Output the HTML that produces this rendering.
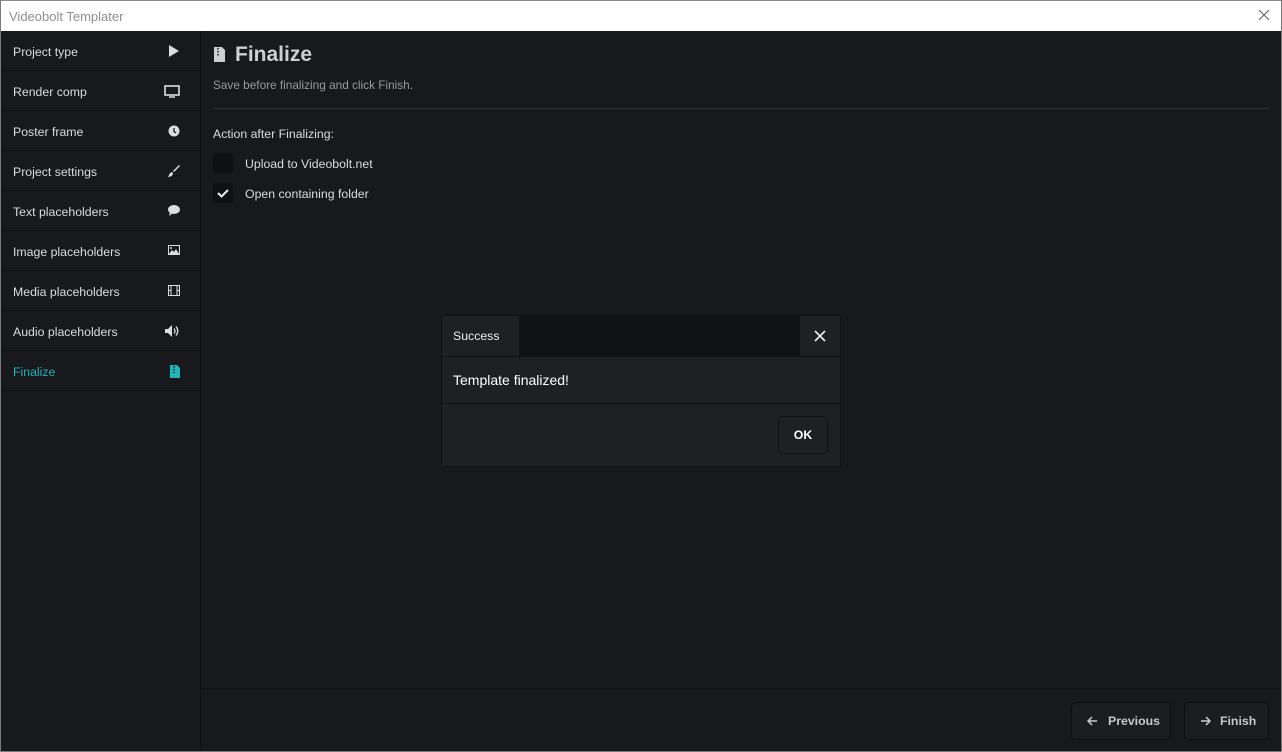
<!DOCTYPE html>
<html><head><style>
*{box-sizing:border-box;margin:0;padding:0}
body{width:1282px;height:752px;background:#18191c;font-family:"Liberation Sans",sans-serif;position:relative;overflow:hidden;color:#e6e6e6}
.frame{position:absolute;inset:0;border:1px solid #7a7a7a;border-top:none}
.title{position:absolute;left:0;top:0;width:1282px;height:31px;background:#fff;border:1px solid #8a8a8a;border-bottom:none;color:#8d8d8d;font-size:13px;line-height:31px;padding-left:8px}
.x{position:absolute;right:10px;top:7px}
.side{position:absolute;left:1px;top:31px;width:200px;height:720px;background:#18191c;border-right:1px solid #0e0f11}
.item{height:40px;border-bottom:1px solid #0e0f11;font-size:12.3px;line-height:42px;padding-left:12px;position:relative;color:#dcdcdc}
.item svg{position:absolute;right:20px;top:14px}
.item.act{color:#22b3bd}
.main{position:absolute;left:201px;top:31px;right:1px;bottom:1px}
h1{position:absolute;left:34px;top:12px;font-size:21px;font-weight:bold;color:#cfcfcf}
.sub{position:absolute;left:12px;top:47px;font-size:11.8px;color:#9a9a9a}
.hr{position:absolute;left:12px;right:12px;top:77px;border-top:1px solid #2d2e32}
.lbl{position:absolute;left:12px;top:96px;font-size:12.3px;color:#dcdcdc}
.cb{position:absolute;left:12px;width:20px;height:20px;background:#0f1012;border-radius:3px}
.cbl{position:absolute;left:44px;font-size:12.3px;color:#dcdcdc}
.foot{position:absolute;left:0;right:0;top:657px;border-top:1px solid #0e0f11;bottom:0}
.btn{position:absolute;top:13px;height:38px;border:1px solid #0c0d0f;border-radius:5px;background:#1c1d21;font-size:12.3px;font-weight:bold;color:#c8c8c8;line-height:36px}
.dlg{position:absolute;left:441px;top:315px;width:400px;height:152px;background:#1f2024;border:1px solid #111}
.dh{height:41px;background:#111213;position:relative;border-bottom:1px solid #111}
.tab{position:absolute;left:0;top:0;width:77px;height:40px;background:#1f2024;font-size:12.3px;line-height:40px;padding-left:11px;color:#eee}
.cl{position:absolute;right:0;top:0;width:40px;height:40px;background:#1f2024}
.db{height:47px;border-bottom:1px solid #111;font-size:14px;line-height:46px;padding-left:11px;color:#fff}
.ok{position:absolute;left:336px;top:100px;width:50px;height:38px;border:1px solid #111;border-radius:5px;font-size:12.3px;font-weight:bold;text-align:center;line-height:36px;color:#fff}
</style></head><body>
<div class="title">Videobolt Templater<svg class="x" width="14" height="14" viewBox="0 0 14 14"><path d="M2 2L12 12M12 2L2 12" stroke="#666" stroke-width="1.2"/></svg></div>
<div class="side">
<div class="item">Project type<svg width="12" height="12" viewBox="0 0 12 12"><path d="M1 0L11 6L1 12Z" fill="#ddd"/></svg></div>
<div class="item">Render comp<svg width="16" height="13" viewBox="0 0 16 13"><rect x="1" y="1" width="14" height="9" fill="none" stroke="#ddd" stroke-width="1.6"/><path d="M5 12H11" stroke="#ddd" stroke-width="1.5"/></svg></div>
<div class="item">Poster frame<svg width="12" height="12" viewBox="0 0 12 12"><circle cx="6" cy="6" r="5.5" fill="#ddd"/><path d="M6 3V6.5L8 8" stroke="#18191c" stroke-width="1.3" fill="none"/></svg></div>
<div class="item">Project settings<svg width="12" height="12" viewBox="0 0 12 12"><path d="M11 0L12 1L6 7L5 6Z M4 7L5 8C5 11 2 12 0 12C1 11 1 8 4 7Z" fill="#ddd"/></svg></div>
<div class="item">Text placeholders<svg width="12" height="11" viewBox="0 0 12 11"><ellipse cx="6" cy="4.5" rx="6" ry="4.5" fill="#ddd"/><path d="M2 7L1 11L5 8Z" fill="#ddd"/></svg></div>
<div class="item">Image placeholders<svg width="12" height="10" viewBox="0 0 12 10"><rect x="0.5" y="0.5" width="11" height="9" fill="none" stroke="#ddd"/><path d="M1 9L4 5L6 7L8 4L11 9Z" fill="#ddd"/><circle cx="3" cy="3" r="1" fill="#ddd"/></svg></div>
<div class="item">Media placeholders<svg width="12" height="11" viewBox="0 0 12 11"><rect x="0.5" y="0.5" width="11" height="10" fill="none" stroke="#ddd"/><path d="M3 0V11M9 0V11M0 5.5H3M9 5.5H12" stroke="#ddd"/></svg></div>
<div class="item">Audio placeholders<svg width="15" height="12" viewBox="0 0 15 12"><path d="M0 4H3L7 0V12L3 8H0Z" fill="#ddd"/><path d="M9 3.5Q11 6 9 8.5M11 1.5Q14.5 6 11 10.5" stroke="#ddd" stroke-width="1.3" fill="none"/></svg></div>
<div class="item act">Finalize<svg width="10" height="13" viewBox="0 0 10 13"><path d="M0 0H7L10 3V13H0Z" fill="#22b3bd"/><path d="M4 1V8" stroke="#18191c" stroke-width="1.5" stroke-dasharray="1.5 1.5"/></svg></div>
</div>
<div class="main">
<svg style="position:absolute;left:13px;top:16px" width="11" height="15" viewBox="0 0 11 15"><path d="M0 0H8L11 3V15H0Z" fill="#cfcfcf"/><path d="M4 1V9" stroke="#18191c" stroke-width="1.5" stroke-dasharray="1.5 1.5"/></svg>
<h1>Finalize</h1>
<div class="sub">Save before finalizing and click Finish.</div>
<div class="hr"></div>
<div class="lbl">Action after Finalizing:</div>
<div class="cb" style="top:122px"></div><div class="cbl" style="top:126px">Upload to Videobolt.net</div>
<div class="cb" style="top:152px"><svg width="20" height="20" viewBox="0 0 20 20"><path d="M5 10L8.5 13.5L15 7" stroke="#eee" stroke-width="2" fill="none"/></svg></div><div class="cbl" style="top:156px">Open containing folder</div>
<div class="foot">
<div class="btn" style="left:870px;width:100px;padding-left:36px">Previous<svg style="position:absolute;left:15px;top:13px" width="11" height="10" viewBox="0 0 11 10"><path d="M10 5H1M5 1L1 5L5 9" stroke="#ccc" stroke-width="1.5" fill="none"/></svg></div>
<div class="btn" style="left:983px;width:85px;padding-left:35px">Finish<svg style="position:absolute;left:15px;top:13px" width="11" height="10" viewBox="0 0 11 10"><path d="M1 5H10M6 1L10 5L6 9" stroke="#ccc" stroke-width="1.5" fill="none"/></svg></div>
</div>
</div>
<div class="dlg">
<div class="dh"><div class="tab">Success</div><div class="cl"><svg style="position:absolute;left:14px;top:14px" width="12" height="12" viewBox="0 0 12 12"><path d="M1 1L11 11M11 1L1 11" stroke="#eee" stroke-width="1.6"/></svg></div></div>
<div class="db">Template finalized!</div>
<div class="ok">OK</div>
</div>
<div class="frame"></div>
</body></html>
